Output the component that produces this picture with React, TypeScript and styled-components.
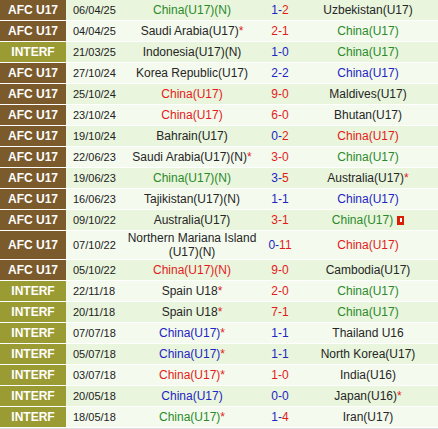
import styled, { createGlobalStyle } from 'styled-components';

type Side = { name: string; color: string; star?: boolean; card?: boolean };
type Match = {
  league: 'AFC U17' | 'INTERF';
  date: string;
  home: Side;
  away: Side;
  score: [string, string];
  scoreColor: [string, string];
};

const GREEN = '#2b8a2b';
const RED = '#e31b1b';
const BLUE = '#2424c4';
const BLACK = '#262626';

const matches: Match[] = [
  { league: 'AFC U17', date: '06/04/25', home: { name: 'China(U17)(N)', color: GREEN }, away: { name: 'Uzbekistan(U17)', color: BLACK }, score: ['1-', '2'], scoreColor: [BLUE, RED] },
  { league: 'AFC U17', date: '04/04/25', home: { name: 'Saudi Arabia(U17)', color: BLACK, star: true }, away: { name: 'China(U17)', color: GREEN }, score: ['2-', '1'], scoreColor: [RED, RED] },
  { league: 'INTERF', date: '21/03/25', home: { name: 'Indonesia(U17)(N)', color: BLACK }, away: { name: 'China(U17)', color: GREEN }, score: ['1-', '0'], scoreColor: [BLUE, BLUE] },
  { league: 'AFC U17', date: '27/10/24', home: { name: 'Korea Republic(U17)', color: BLACK }, away: { name: 'China(U17)', color: BLUE }, score: ['2-', '2'], scoreColor: [BLUE, BLUE] },
  { league: 'AFC U17', date: '25/10/24', home: { name: 'China(U17)', color: RED }, away: { name: 'Maldives(U17)', color: BLACK }, score: ['9-', '0'], scoreColor: [RED, RED] },
  { league: 'AFC U17', date: '23/10/24', home: { name: 'China(U17)', color: RED }, away: { name: 'Bhutan(U17)', color: BLACK }, score: ['6-', '0'], scoreColor: [RED, RED] },
  { league: 'AFC U17', date: '19/10/24', home: { name: 'Bahrain(U17)', color: BLACK }, away: { name: 'China(U17)', color: RED }, score: ['0-', '2'], scoreColor: [BLUE, RED] },
  { league: 'AFC U17', date: '22/06/23', home: { name: 'Saudi Arabia(U17)(N)', color: BLACK, star: true }, away: { name: 'China(U17)', color: GREEN }, score: ['3-', '0'], scoreColor: [RED, RED] },
  { league: 'AFC U17', date: '19/06/23', home: { name: 'China(U17)(N)', color: GREEN }, away: { name: 'Australia(U17)', color: BLACK, star: true }, score: ['3-', '5'], scoreColor: [BLUE, RED] },
  { league: 'AFC U17', date: '16/06/23', home: { name: 'Tajikistan(U17)(N)', color: BLACK }, away: { name: 'China(U17)', color: BLUE }, score: ['1-', '1'], scoreColor: [BLUE, BLUE] },
  { league: 'AFC U17', date: '09/10/22', home: { name: 'Australia(U17)', color: BLACK }, away: { name: 'China(U17)', color: GREEN, card: true }, score: ['3-', '1'], scoreColor: [RED, RED] },
  { league: 'AFC U17', date: '07/10/22', home: { name: 'Northern Mariana Island (U17)(N)', color: BLACK }, away: { name: 'China(U17)', color: RED }, score: ['0-', '11'], scoreColor: [BLUE, RED] },
  { league: 'AFC U17', date: '05/10/22', home: { name: 'China(U17)(N)', color: RED }, away: { name: 'Cambodia(U17)', color: BLACK }, score: ['9-', '0'], scoreColor: [RED, RED] },
  { league: 'INTERF', date: '22/11/18', home: { name: 'Spain U18', color: BLACK, star: true }, away: { name: 'China(U17)', color: GREEN }, score: ['2-', '0'], scoreColor: [RED, RED] },
  { league: 'INTERF', date: '20/11/18', home: { name: 'Spain U18', color: BLACK, star: true }, away: { name: 'China(U17)', color: GREEN }, score: ['7-', '1'], scoreColor: [RED, RED] },
  { league: 'INTERF', date: '07/07/18', home: { name: 'China(U17)', color: BLUE, star: true }, away: { name: 'Thailand U16', color: BLACK }, score: ['1-', '1'], scoreColor: [BLUE, BLUE] },
  { league: 'INTERF', date: '05/07/18', home: { name: 'China(U17)', color: BLUE, star: true }, away: { name: 'North Korea(U17)', color: BLACK }, score: ['1-', '1'], scoreColor: [BLUE, BLUE] },
  { league: 'INTERF', date: '03/07/18', home: { name: 'China(U17)', color: RED, star: true }, away: { name: 'India(U16)', color: BLACK }, score: ['1-', '0'], scoreColor: [RED, RED] },
  { league: 'INTERF', date: '20/05/18', home: { name: 'China(U17)', color: BLUE }, away: { name: 'Japan(U16)', color: BLACK, star: true }, score: ['0-', '0'], scoreColor: [BLUE, BLUE] },
  { league: 'INTERF', date: '18/05/18', home: { name: 'China(U17)', color: GREEN, star: true }, away: { name: 'Iran(U17)', color: BLACK }, score: ['1-', '4'], scoreColor: [BLUE, RED] },
];

function TeamName({ side }: { side: Side }) {
  return (
    <Team>
      <TeamText $color={side.color}>
        {side.name}
        {side.star && <Star>*</Star>}
        {side.card && <RedCard />}
      </TeamText>
    </Team>
  );
}

export default function App() {
  return (
    <>
      <GlobalStyle />
      <Table>
        {matches.map((m, i) => (
          <Row key={i} $alt={i % 2 === 1}>
            <League $kind={m.league}>{m.league}</League>
            <DateCell>{m.date}</DateCell>
            <TeamName side={m.home} />
            <Score>
              <ScorePart $color={m.scoreColor[0]}>{m.score[0]}</ScorePart>
              <ScorePart $color={m.scoreColor[1]}>{m.score[1]}</ScorePart>
            </Score>
            <TeamName side={m.away} />
          </Row>
        ))}
      </Table>
    </>
  );
}

const GlobalStyle = createGlobalStyle`
  body {
    margin: 0;
    background: #ffffff;
    font-family: "Liberation Sans", Arial, sans-serif;
  }
`;

const Table = styled.div`
  display: flex;
  flex-direction: column;
  width: 438px;
  border-bottom: 1px solid #dcdcdc;
`;

const Row = styled.div<{ $alt: boolean }>`
  display: grid;
  grid-template-columns: 66px 56px 140px 36px 140px;
  min-height: 20px;
  border-bottom: 1px solid #ffffff;
  background: ${(p) => (p.$alt ? '#f4faee' : '#e9f5dd')};
  font-size: 12px;
  line-height: 14px;
`;

const League = styled.div<{ $kind: string }>`
  display: flex;
  align-items: center;
  justify-content: center;
  background: ${(p) => (p.$kind === 'INTERF' ? '#9b9b34' : '#7b5a2c')};
  color: #ffffff;
  font-weight: bold;
  font-size: 12px;
`;

const DateCell = styled.div`
  display: flex;
  align-items: center;
  padding-left: 7px;
  font-size: 11px;
  color: #222222;
`;

const Team = styled.div`
  display: flex;
  align-items: center;
  justify-content: center;
  text-align: center;
  padding: 0 4px;
`;

const TeamText = styled.span<{ $color: string }>`
  color: ${(p) => p.$color};
`;

const Star = styled.span`
  color: ${RED};
`;

const RedCard = styled.span`
  display: inline-block;
  width: 7px;
  height: 9px;
  margin-left: 4px;
  vertical-align: -1px;
  background: linear-gradient(#ffffff, #ffffff) 50% 2px / 2px 4px no-repeat, #d81e05;
`;

const Score = styled.div`
  display: flex;
  align-items: center;
  justify-content: center;
`;

const ScorePart = styled.span<{ $color: string }>`
  color: ${(p) => p.$color};
`;
